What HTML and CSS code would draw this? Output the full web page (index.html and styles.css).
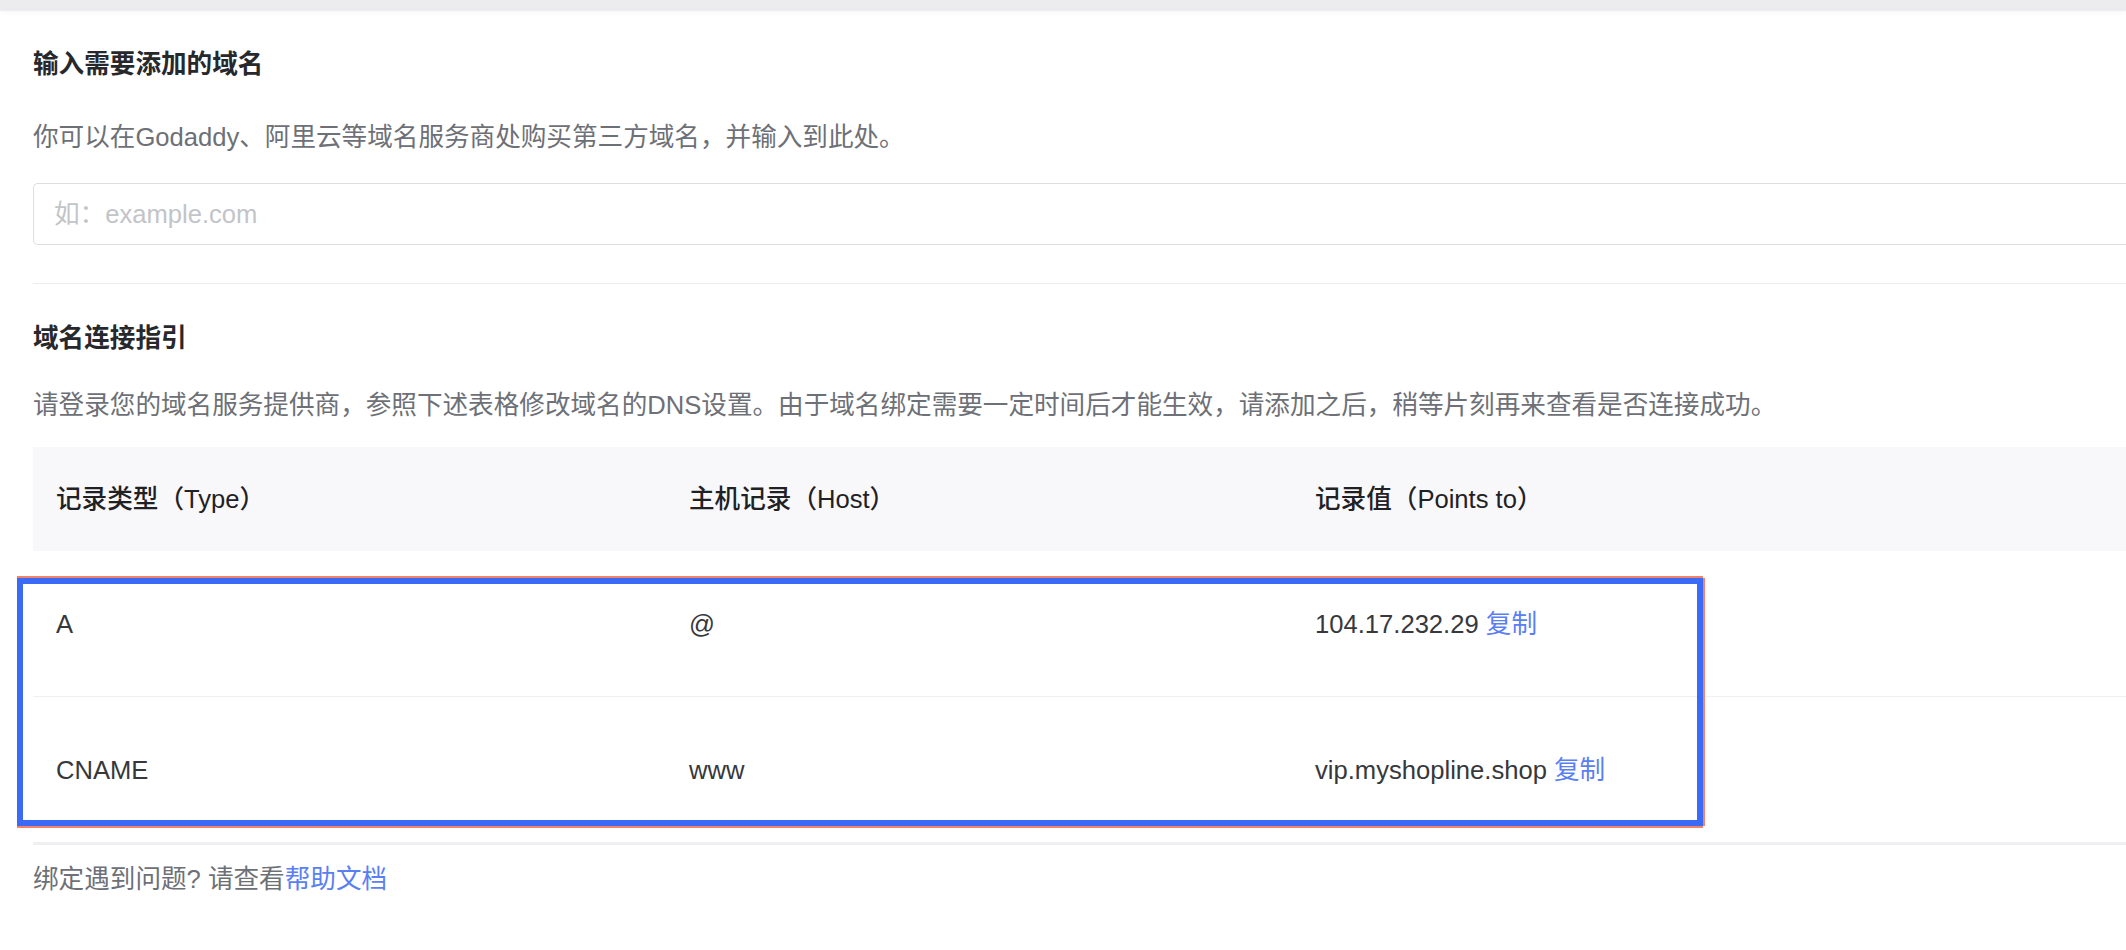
FILE: index.html
```html
<!DOCTYPE html>
<html lang="zh-CN">
<head>
    <meta charset="UTF-8">
    <meta name="viewport" content="width=device-width, initial-scale=1.0">
    <title>添加域名</title>
    <link rel="stylesheet" href="styles.css">
</head>
<body>
    <div class="topbar"></div>

    <div class="page">
        <h2 class="title">输入需要添加的域名</h2>
        <p class="desc">你可以在Godaddy、阿里云等域名服务商处购买第三方域名，并输入到此处。</p>
        <input class="domain-input" type="text" placeholder="如：example.com">

        <div class="divider"></div>

        <h2 class="title guide-title">域名连接指引</h2>
        <p class="desc guide-desc">请登录您的域名服务提供商，参照下述表格修改域名的DNS设置。由于域名绑定需要一定时间后才能生效，请添加之后，稍等片刻再来查看是否连接成功。</p>

        <div class="dns-table">
            <div class="dns-row dns-head">
                <div class="cell">记录类型（Type）</div>
                <div class="cell">主机记录（Host）</div>
                <div class="cell">记录值（Points to）</div>
            </div>
            <div class="dns-row">
                <div class="cell">A</div>
                <div class="cell">@</div>
                <div class="cell">104.17.232.29 <a class="copy" href="#">复制</a></div>
            </div>
            <div class="dns-row">
                <div class="cell">CNAME</div>
                <div class="cell">www</div>
                <div class="cell">vip.myshopline.shop <a class="copy" href="#">复制</a></div>
            </div>

            <!-- 标注框 -->
            <div class="highlight"></div>
        </div>

        <p class="help">绑定遇到问题? 请查看<a href="#">帮助文档</a></p>
    </div>
</body>
</html>
```

FILE: styles.css
```css
body {
    margin: 0;
    background-color: #fff;
    font-family: "Liberation Sans", "Noto Sans CJK SC", sans-serif;
    font-size: 25.6px;
    color: #36383c;
}

.topbar {
    height: 11px;
    background-color: #ececef;
    box-shadow: 0 2px 4px rgba(0, 0, 0, 0.03);
}

.page {
    padding-left: 33px;
}

.title {
    margin: 35px 0 0;
    font-size: 25.6px;
    line-height: 36px;
    font-weight: 700;
    color: #26282c;
}

.desc {
    margin: 37px 0 0;
    line-height: 36px;
    color: #6d7076;
}

.domain-input {
    display: block;
    box-sizing: border-box;
    width: 100%;
    height: 62px;
    margin-top: 28px;
    padding: 0 20px;
    border: 1px solid #dddee2;
    border-right: none;
    border-radius: 5px 0 0 5px;
    font-family: inherit;
    font-size: 25.6px;
    color: #303236;
    outline: none;
}

.domain-input::placeholder {
    color: #c2c4c8;
}

.divider {
    height: 1px;
    margin-top: 38px;
    background-color: #ececef;
}

.guide-title {
    margin-top: 36px;
}

.guide-desc {
    margin-top: 31px;
}

.dns-table {
    position: relative;
    margin-top: 24px;
    border-bottom: 2px solid #efeff2;
}

.dns-row {
    display: grid;
    grid-template-columns: 633px 626px 1fr;
    align-items: center;
    height: 145px;
    border-bottom: 1px solid #f0f0f3;
}

.dns-row:last-of-type {
    border-bottom: none;
}

.dns-head {
    height: 104px;
    background-color: #f8f8fa;
    border-bottom: none;
    font-weight: 500;
    color: #1f2125;
}

.cell {
    padding-left: 23px;
    line-height: 36px;
}

.copy {
    color: #5a7ef3;
    text-decoration: none;
}

.highlight {
    position: absolute;
    left: -16px;
    top: 131px;
    width: 1686px;
    height: 248px;
    box-sizing: border-box;
    border: 6px solid #3b6af7;
    box-shadow: 0 -2px 0 #f2836a, 0 2px 0 #f2836a, 2px 0 0 #f2836a;
}

.help {
    margin: 16px 0 0;
    line-height: 36px;
    color: #6d7076;
}

.help a {
    color: #5a7ef3;
    text-decoration: none;
}
```
